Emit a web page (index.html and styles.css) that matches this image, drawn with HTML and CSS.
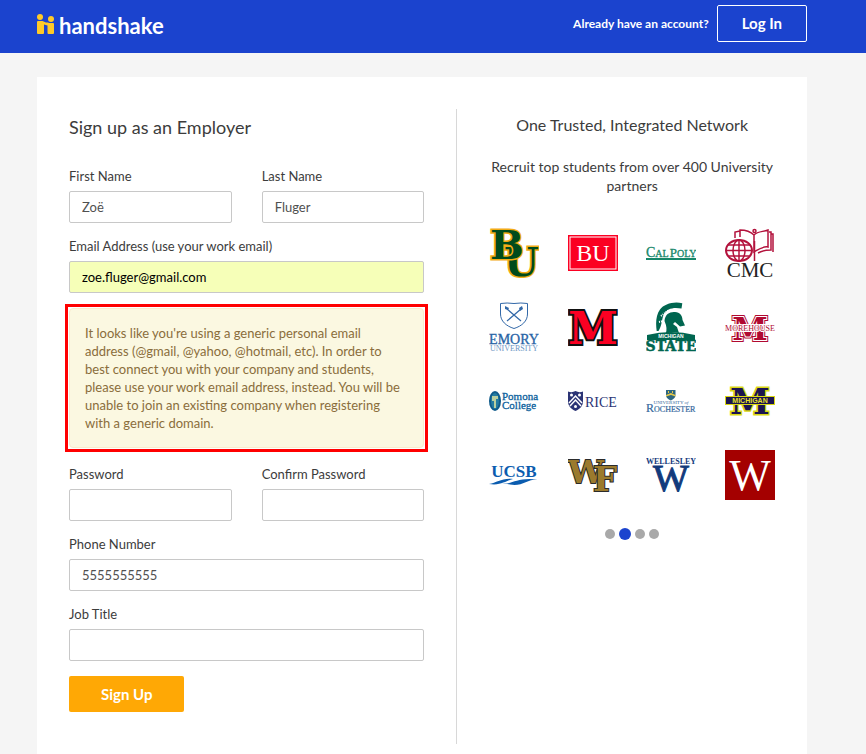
FILE: index.html
```html
<!doctype html>
<html lang="en">
  <head>
    <meta charset="UTF-8" />
    <meta name="viewport" content="width=device-width, initial-scale=1.0" />
    <title>Handshake - Sign up as an Employer</title>
    <link rel="stylesheet" href="styles.css">
  </head>

  <body>
    <header class="header">
      <a class="brand" href="#">
        <svg class="brand-icon" width="18" height="20" viewBox="0 0 18 20">
          <circle cx="3" cy="3" r="3" />
          <circle cx="14" cy="5" r="3" />
          <path d="M1 7h4.500l3.500 1.500h2L12 9h4a1 1 0 0 1 1 1v9a1 1 0 0 1-1 1h-4.500a1 1 0 0 1-1-1v-7.500L7 10.500V19a1 1 0 0 1-1 1H1a1 1 0 0 1-1-1V8a1 1 0 0 1 1-1z" />
        </svg>
        <span>handshake</span>
      </a>
      <div class="account">
        <span>Already have an account?</span>
        <a class="login" href="#">Log In</a>
      </div>
    </header>

    <main class="card">
      <form class="signup">
        <h1 class="title">Sign up as an Employer</h1>
        <div class="row">
          <div class="field">
            <label for="first-name">First Name</label>
            <input id="first-name" type="text" value="Zoë" />
          </div>
          <div class="field">
            <label for="last-name">Last Name</label>
            <input id="last-name" type="text" value="Fluger" />
          </div>
        </div>
        <div class="field">
          <label for="email">Email Address (use your work email)</label>
          <input id="email" class="autofilled" type="email" value="zoe.fluger@gmail.com" />
        </div>
        <div class="highlight">
          <div class="alert">
            It looks like you're using a generic personal email address (@gmail, @yahoo, @hotmail, etc). In order to best connect you with your company and students, please use your work email address, instead. You will be unable to join an existing company when registering with a generic domain.
          </div>
        </div>
        <div class="row">
          <div class="field">
            <label for="password">Password</label>
            <input id="password" type="password" />
          </div>
          <div class="field">
            <label for="confirm">Confirm Password</label>
            <input id="confirm" type="password" />
          </div>
        </div>
        <div class="field">
          <label for="phone">Phone Number</label>
          <input id="phone" type="tel" value="5555555555" />
        </div>
        <div class="field">
          <label for="job">Job Title</label>
          <input id="job" type="text" />
        </div>
        <button class="submit" type="submit">Sign Up</button>
      </form>

      <section class="network">
        <h2 class="network-title">One Trusted, Integrated Network</h2>
        <p class="network-text">Recruit top students from over 400 University partners</p>

        <div class="logos">
          <!-- Baylor -->
          <svg class="logo" viewBox="0 0 50 50">
            <g class="slab" font-size="40" fill="#004b1c" stroke="#f2ac14" stroke-width="3">
              <text x="15" y="48">U</text>
              <text x="1" y="31">B</text>
            </g>
          </svg>
          <!-- Boston University -->
          <svg class="logo" viewBox="0 0 50 50">
            <rect y="7" width="50" height="36" fill="#fb0022" />
            <rect x="2" y="9" width="46" height="32" fill="none" stroke="#fff" />
            <text class="serif" x="25" y="33" font-size="24" fill="#fff" text-anchor="middle">BU</text>
          </svg>
          <!-- Cal Poly -->
          <svg class="logo" viewBox="0 0 50 50">
            <text class="serif" x="0" y="29" font-size="10" fill="#16876a" stroke="#16876a" stroke-width=".3"><tspan font-size="14">C</tspan>AL<tspan dx="1" font-size="13">P</tspan>OLY</text>
            <rect y="30" width="50" height="2" fill="#16876a" />
          </svg>
          <!-- Claremont McKenna -->
          <svg class="logo" viewBox="0 0 50 50">
            <g fill="none" stroke="#b3123c" stroke-width="1.500">
              <path d="M10 10V4l5-1M15 9V2c5 0 10 1 14 5c4-4 9-3 14-5v17c-5-1-9 2-14 5V7" />
              <path d="M44 4h2v18c-5 0-8 0-13 3M46 6h2v18" />
              <circle cx="29.500" cy="3" r="1.500" />
              <ellipse cx="14" cy="22.500" rx="13" ry="10.500" fill="#fff" stroke-width="2" />
              <ellipse cx="14" cy="22.500" rx="6" ry="10.500" />
              <path d="M14 12v21M1 22.500h26M3 17h22M3 28h22M29.500 13v20" />
            </g>
            <text class="serif" x="25" y="49" font-size="21" fill="#222" text-anchor="middle">CMC</text>
          </svg>
          <!-- Emory -->
          <svg class="logo" viewBox="0 0 50 50">
            <path d="M11.500 1.500Q18 .5 25 1.500Q32 .5 38.500 1.500V12C38.500 19 33 24 25 26.500C17 24 11.500 19 11.500 12Z" fill="#fff" stroke="#3268a8" />
            <path d="M18 7L32 19M32 7L18 19" stroke="#3268a8" stroke-width="1.200" />
            <path d="M16 4l4 2-1 2-3-1zM30 6l3-2 1 3-3 2z" fill="#3268a8" />
            <text class="serif" x="25" y="42" font-size="14" fill="#2763a5" stroke="#2763a5" stroke-width=".3" text-anchor="middle">EMORY</text>
            <text class="serif" x="25" y="49" font-size="8" fill="#6e96c4" text-anchor="middle">UNIVERSITY</text>
          </svg>
          <!-- Miami -->
          <svg class="logo" viewBox="0 0 50 50">
            <text class="slab" x="25" y="42" font-size="45" fill="#fb0022" stroke="#111" stroke-width="4" text-anchor="middle">M</text>
          </svg>
          <!-- Michigan State -->
          <svg class="logo" viewBox="0 0 50 50">
            <g fill="#006650">
              <path d="M10.700 29C9.500 21 10 13 14 7.500C18 2 28-1 36.300 1.300L35.500 6.500C28 5 21 6 17.500 13C15.500 18 16 24 12.500 29Z" />
              <path d="M18.500 19C19 12 24 9.500 29 10C34 10 36.500 14 36.500 18L39 23.500L34 24.500L29 20L27 22L31 25L33 31Q26 29 19.500 32Q22 27 18.500 19Z" />
              <path d="M1 33Q25 27 49 33V38H1Z" />
            </g>
            <path d="M15 14l8-6 M13 20l4-1" stroke="#fff" stroke-dasharray="1 1" stroke-width="2" />
            <text class="sans" x="25" y="36" font-size="5" fill="#fff" text-anchor="middle">MICHIGAN</text>
            <text class="slab" x="25" y="49" font-size="14" fill="#006650" stroke="#006650" stroke-width=".5" text-anchor="middle">STATE</text>
          </svg>
          <!-- Morehouse -->
          <svg class="logo" viewBox="0 0 50 50">
            <g class="slab" text-anchor="middle">
              <text x="25" y="38" font-size="32" fill="#b00931" stroke="#b00931" stroke-width="4">M</text>
              <text x="25" y="38" font-size="32" fill="#b00931" stroke="#fff" stroke-width="2">M</text>
            </g>
            <text class="serif" x="25" y="29" font-size="8" fill="#b00931" stroke="#fff" stroke-width="2" text-anchor="middle">MOREHOUSE</text>
          </svg>
          <!-- Pomona -->
          <svg class="logo" viewBox="0 0 50 50">
            <ellipse cx="6" cy="25" rx="6" ry="10" fill="#0e5a8a" />
            <ellipse cx="6" cy="25" rx="4" ry="8" fill="#257ba0" />
            <path d="M3 20h6v3H7v9H5v-7H3z" fill="#b9cfa0" />
            <g class="serif" font-size="11" fill="#0b5f9c" stroke="#0b5f9c" stroke-width=".3">
              <text x="13" y="24">Pomona</text>
              <text x="13" y="33">College</text>
            </g>
          </svg>
          <!-- Rice -->
          <svg class="logo" viewBox="0 0 50 50">
            <path d="M0 15.500Q4 17 7.500 15Q11 17 15 15.500V25C15 30 12 33 7.500 35C3 33 0 30 0 25Z" fill="#2b3475" />
            <path d="M1 27L7.500 20L14 27M2 30L7.500 24L13 30" fill="none" stroke="#fff" stroke-width="1.500" />
            <g fill="#fff">
              <circle cx="3.500" cy="19" r="1.500" />
              <circle cx="11.500" cy="19" r="1.500" />
              <circle cx="7.500" cy="30.500" r="1.500" />
            </g>
            <text class="serif" x="17" y="31" font-size="14" fill="#2b3475">RICE</text>
          </svg>
          <!-- Rochester -->
          <svg class="logo" viewBox="0 0 50 50">
            <path d="M20 14h9.500v5c0 3-2 4-4.700 5.500C22 23 20 22 20 19z" fill="#2d6680" />
            <path d="M20 19l5-2 4.500 2v1.500L25 19l-5 1.500zM22 15h1v2h-1zM26 15h1v2h-1z" fill="#e4c84a" />
            <text class="serif" x="25" y="28" font-size="5" fill="#35689d" text-anchor="middle">UNIVERSITY <tspan font-style="italic">of</tspan></text>
            <text class="serif" x="0" y="36" font-size="8" fill="#35689d" stroke="#35689d" stroke-width=".2"><tspan font-size="12">R</tspan>OCHESTER</text>
          </svg>
          <!-- Michigan -->
          <svg class="logo" viewBox="0 0 50 50">
            <text class="slab" x="25" y="38" font-size="36" fill="#1b1450" stroke="#d9d714" stroke-width="3" text-anchor="middle">M</text>
            <rect x=".5" y="20.500" width="49" height="8" fill="#1b1450" stroke="#d9d714" />
            <text class="sans" x="25" y="27" font-size="7" fill="#e8e12a" text-anchor="middle">MICHIGAN</text>
          </svg>
          <!-- UC Santa Barbara -->
          <svg class="logo" viewBox="0 0 50 50">
            <text class="serif bold" x="25" y="27" font-size="17" fill="#0b5caf" text-anchor="middle">UCSB</text>
            <path d="M0 34C8 33 12 28 24 29C18 30 13 36 0 34ZM13 34C24 34 28 27 49 29.500C38 29 33 37 21 34.500Q17 33.500 13 34Z" fill="#0b5caf" />
          </svg>
          <!-- Wake Forest -->
          <svg class="logo" viewBox="0 0 50 50">
            <g class="slab" fill="#9b7a2d" stroke="#2b2b2b" stroke-width="2">
              <text x="0" y="33" font-size="32">W</text>
              <text x="25" y="41" font-size="34">F</text>
            </g>
          </svg>
          <!-- Wellesley -->
          <svg class="logo" viewBox="0 0 50 50">
            <text class="serif bold" x="25" y="14" font-size="8" fill="#123a7c" text-anchor="middle">WELLESLEY</text>
            <text class="serif" x="25" y="41" font-size="38" fill="#123a7c" stroke="#123a7c" text-anchor="middle">W</text>
          </svg>
          <!-- W -->
          <svg class="logo" viewBox="0 0 50 50">
            <rect width="50" height="50" fill="#a40000" />
            <text class="serif" x="25" y="40" font-size="44" fill="#fff" text-anchor="middle">W</text>
          </svg>
        </div>

        <div class="dots">
          <button class="dot" type="button" aria-label="Slide 1"></button>
          <button class="dot active" type="button" aria-label="Slide 2"></button>
          <button class="dot" type="button" aria-label="Slide 3"></button>
          <button class="dot" type="button" aria-label="Slide 4"></button>
        </div>
      </section>
    </main>
  </body>
</html>
```

FILE: styles.css
```css
* {
  box-sizing: border-box;
}

body {
  margin: 0;
  background-color: #f5f5f5;
  color: #3c3c3c;
  font-family: Lato, "Liberation Sans", sans-serif;
  font-size: 13px;
  line-height: 20px;
}

.header {
  display: flex;
  justify-content: space-between;
  align-items: flex-start;
  padding: 5px 59px 11px 37px;
  background-color: #1b43ce;
  color: white;
}

.brand {
  display: flex;
  gap: 4px;
  padding-top: 9px;
  color: white;
  font-size: 22px;
  font-weight: bold;
  line-height: 24px;
  text-decoration: none;
}

.brand-icon {
  fill: #ffca28;
}

.account {
  display: flex;
  align-items: center;
  gap: 8px;
  font-size: 12px;
  font-weight: bold;
}

.login {
  padding: 8px 24px 9px;
  border: 1px solid white;
  border-radius: 2px;
  color: white;
  font-size: 15px;
  line-height: 18px;
  text-decoration: none;
}

.card {
  display: grid;
  grid-template-columns: 55fr 45fr;
  margin: 24px 59px 0 37px;
  padding: 32px 32px 10px;
  background-color: white;
}

.signup {
  display: flex;
  flex-direction: column;
  gap: 13px;
  padding: 0 32px 32px 0;
  border-right: 1px solid #d8d8d8;
}

.title {
  margin: 0 0 8px;
  font-size: 18px;
  font-weight: normal;
  line-height: 36px;
}

.row {
  display: grid;
  grid-template-columns: 1fr 1fr;
  gap: 30px;
}

.field {
  display: flex;
  flex-direction: column;
  gap: 5px;
}

.field input {
  width: 100%;
  height: 32px;
  padding: 0 12px;
  border: 1px solid #c8c8c8;
  border-radius: 2px;
  background-color: white;
  color: #505050;
  font: inherit;
}

.field .autofilled {
  background-color: #f6ffb8;
  color: black;
}

.highlight {
  margin: -2px -4px -1px;
  padding: 1px;
  border: 3px solid red;
}

.alert {
  padding: 15px 20px 15px 15px;
  border: 1px solid #faebcc;
  border-radius: 4px;
  background-color: #fbf8e1;
  color: #8a6d3b;
  line-height: 18px;
}

.submit {
  align-self: flex-start;
  margin-top: 2px;
  padding: 8px 32px;
  border: 0;
  border-radius: 2px;
  background-color: #ffa805;
  color: white;
  font: inherit;
  font-size: 15px;
  font-weight: bold;
}

.network {
  padding-left: 32px;
  text-align: center;
}

.network-title {
  margin: 0 0 16px;
  font-size: 16px;
  font-weight: normal;
  line-height: 32px;
}

.network-text {
  margin: 0;
  font-size: 14px;
  line-height: 19px;
}

.logos {
  display: grid;
  grid-template-columns: repeat(4, 50px);
  justify-content: space-between;
  row-gap: 24px;
  margin-top: 33px;
}

.logo {
  width: 50px;
  height: 50px;
}

.logo text {
  paint-order: stroke;
}

.slab {
  font-family: "DejaVu Serif", serif;
  font-weight: bold;
}

.serif {
  font-family: "Liberation Serif", serif;
}

.sans {
  font-family: "Liberation Sans", sans-serif;
  font-weight: bold;
}

.bold {
  font-weight: bold;
}

.dots {
  display: flex;
  justify-content: center;
  align-items: center;
  gap: 4px;
  margin-top: 28px;
}

.dot {
  width: 10px;
  height: 10px;
  padding: 0;
  border: 0;
  border-radius: 50%;
  background-color: #a9a9a9;
}

.dot.active {
  width: 12px;
  height: 12px;
  background-color: #1b43ce;
}
```
